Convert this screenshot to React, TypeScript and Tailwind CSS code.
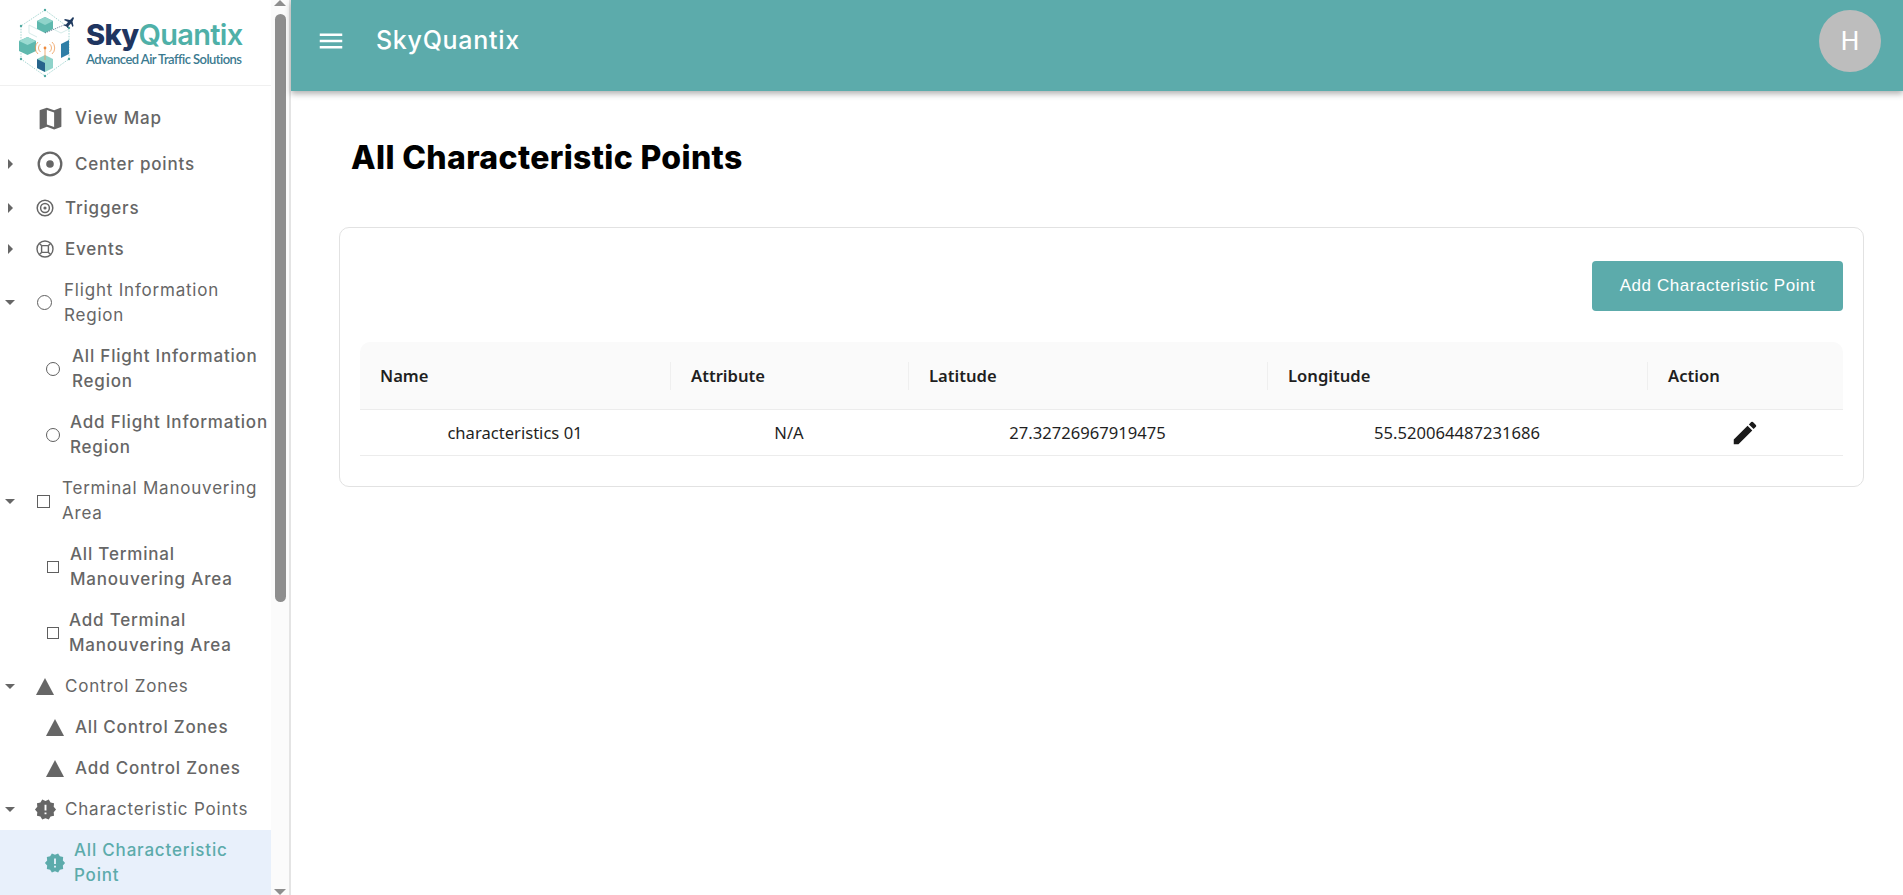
import { ReactNode } from "react";
import { MdEdit, MdNewReleases } from "react-icons/md";

const poppins = "font-['Inter','Noto_Sans',sans-serif]";

function SkyLogo() {
  return (
    <svg viewBox="0 0 56 70" className="h-[70px] w-[56px] shrink-0">
      <path d="M27 2 L51 20 L51 51 L27 68 L3 51 L3 18 Z" fill="none" stroke="#7cc4bd" strokeWidth="0.7" strokeDasharray="1.5 1.2" />
      {/* cubes */}
      <path d="M27 9 L35 13 L35 21 L27 25 L19 21 L19 13 Z" fill="#5fb8ae" />
      <path d="M27 17 L35 13 L27 9 L19 13 Z" fill="#8fd3ca" />
      <path d="M9.5 29 L18 33 L18 43 L9.5 47 L1 43 L1 33 Z" fill="#5fb8ae" />
      <path d="M9.5 37 L18 33 L9.5 29 L1 33 Z" fill="#9adad1" />
      <path d="M43 36 L51 32 L51 46 L43 50 Z" fill="#2f7ea6" />
      <path d="M27 47 L35 51 L35 60 L27 64 L19 60 L19 51 Z" fill="#8fd3ca" />
      <path d="M27 55 L27 64 L19 60 L19 51 Z" fill="#27648c" />
      <path d="M35 21 L43 25 L51 21 M19 21 L11 17 L11 25 L19 29" fill="none" stroke="#c4e2df" strokeWidth="0.7" />
      {/* antenna */}
      <g fill="none" stroke="#ee9a55" strokeWidth="0.8">
        <path d="M20 34 A8 8 0 0 0 20 46" />
        <path d="M34 34 A8 8 0 0 1 34 46" />
        <path d="M22.5 36 A5 5 0 0 0 22.5 44" />
        <path d="M31.5 36 A5 5 0 0 1 31.5 44" />
        <path d="M27 40 L27 52" />
      </g>
      <circle cx="27" cy="40" r="1.4" fill="#ee8a3c" />
      {/* nodes */}
      <g fill="#4ea8a0">
        <circle cx="27" cy="2" r="1.2" />
        <circle cx="3" cy="18" r="1.2" />
        <circle cx="3" cy="51" r="1.2" />
        <circle cx="27" cy="68" r="1.2" />
        <circle cx="51" cy="20" r="1.2" />
        <circle cx="51" cy="51" r="1.2" />
      </g>
      <path d="M27 25 L46 17" stroke="#1f3a5f" strokeWidth="0.6" strokeDasharray="1.2 1" />
      {/* plane */}
      <path d="M55 9 L52 12 L47 11 L46 12 L50 14 L48 16.5 L46 16.5 L46 17.5 L48.5 18.5 L49.5 20 L50.5 19.5 L50.5 18 L53 15.5 L54.5 19 L55.5 18 L54.5 13.5 L56 10 Z" fill="#1f3a5f" />
    </svg>
  );
}

const MapIcon = () => (
  <svg viewBox="0 0 24 24" className="h-[29px] w-[29px] fill-[#666666]">
    <path d="m20.5 3-.16.03L15 5.1 9 3 3.36 4.9c-.21.07-.36.25-.36.48V20.5c0 .28.22.5.5.5l.16-.03L9 18.9l6 2.1 5.64-1.9c.21-.07.36-.25.36-.48V3.5c0-.28-.22-.5-.5-.5M15 19l-6-2.11V5l6 2.11z" />
  </svg>
);

const RadioIcon = () => (
  <svg viewBox="0 0 26 26" className="h-[26px] w-[26px]">
    <circle cx="13" cy="13" r="11.3" fill="none" stroke="#666666" strokeWidth="2.3" />
    <circle cx="13" cy="13" r="3.8" fill="#666666" />
  </svg>
);

const TargetIcon = () => (
  <svg viewBox="0 0 18 18" className="h-[18px] w-[18px]">
    <circle cx="9" cy="9" r="7.8" fill="none" stroke="#666666" strokeWidth="1.5" />
    <circle cx="9" cy="9" r="4.4" fill="none" stroke="#666666" strokeWidth="1.5" />
    <circle cx="9" cy="9" r="1.6" fill="#666666" />
  </svg>
);

const EventsIcon = () => (
  <svg viewBox="0 0 18 18" className="h-[18px] w-[18px]" fill="none" stroke="#666666" strokeWidth="1.4">
    <circle cx="9" cy="9" r="8" />
    <rect x="5.6" y="5.6" width="6.8" height="6.8" rx="1" />
    <path d="M3.4 3.4 L5.8 5.8 M14.6 3.4 L12.2 5.8 M3.4 14.6 L5.8 12.2 M14.6 14.6 L12.2 12.2" />
  </svg>
);

const Ring = ({ size }: { size: string }) => (
  <div className={`${size} rounded-full border-[1.5px] border-[#5f5f5f]`} />
);

const Square = ({ size }: { size: string }) => <div className={`${size} border-[1.5px] border-[#5f5f5f]`} />;

const Triangle = () => (
  <svg viewBox="0 0 18 17" className="h-[17px] w-[18px] fill-[#666666]">
    <path d="M9 0 L18 17 L0 17 Z" />
  </svg>
);

const CaretRight = () => (
  <svg viewBox="0 0 5 10" className="h-[10px] w-[5px] fill-[#666666]">
    <path d="M0 0 L5 5 L0 10 Z" />
  </svg>
);

const CaretDown = () => (
  <svg viewBox="0 0 10 5" className="h-[5px] w-[10px] fill-[#666666]">
    <path d="M0 0 L10 0 L5 5 Z" />
  </svg>
);

type NavRow = {
  label: string;
  icon: ReactNode;
  rowClass: string;
  iconClass: string;
  textClass: string;
  caret?: "right" | "down";
  active?: boolean;
  parent?: boolean;
};

const navRows: NavRow[] = [
  { label: "View Map", icon: <MapIcon />, rowClass: "h-[46px]", iconClass: "ml-[16px] w-[29px]", textClass: "ml-[10px]" },
  { label: "Center points", icon: <RadioIcon />, rowClass: "h-[46px]", caret: "right", iconClass: "ml-[17px] w-[26px]", textClass: "ml-[12px]" },
  { label: "Triggers", icon: <TargetIcon />, rowClass: "h-[42px]", caret: "right", iconClass: "ml-[16px] w-[18px]", textClass: "ml-[11px]" },
  { label: "Events", icon: <EventsIcon />, rowClass: "h-[40px]", caret: "right", iconClass: "ml-[16px] w-[18px]", textClass: "ml-[11px]" },
  { label: "Flight Information\nRegion", icon: <Ring size="h-[15px] w-[15px]" />, rowClass: "h-[67px]", caret: "down", parent: true, iconClass: "ml-[17px] w-[15px]", textClass: "ml-[12px]" },
  { label: "All Flight Information\nRegion", icon: <Ring size="h-[14px] w-[14px]" />, rowClass: "h-[66px]", iconClass: "ml-[26px] w-[14px]", textClass: "ml-[12px]" },
  { label: "Add Flight Information\nRegion", icon: <Ring size="h-[14px] w-[14px]" />, rowClass: "h-[66px]", iconClass: "ml-[26px] w-[14px]", textClass: "ml-[10px]" },
  { label: "Terminal Manouvering\nArea", icon: <Square size="h-[13px] w-[13px]" />, rowClass: "h-[66px]", caret: "down", parent: true, iconClass: "ml-[17px] w-[13px]", textClass: "ml-[12px]" },
  { label: "All Terminal\nManouvering Area", icon: <Square size="h-[12px] w-[12px]" />, rowClass: "h-[66px]", iconClass: "ml-[27px] w-[12px]", textClass: "ml-[11px]" },
  { label: "Add Terminal\nManouvering Area", icon: <Square size="h-[12px] w-[12px]" />, rowClass: "h-[66px]", iconClass: "ml-[27px] w-[12px]", textClass: "ml-[10px]" },
  { label: "Control Zones", icon: <Triangle />, rowClass: "h-[40px]", caret: "down", parent: true, iconClass: "ml-[16px] w-[18px]", textClass: "ml-[11px]" },
  { label: "All Control Zones", icon: <Triangle />, rowClass: "h-[42px]", iconClass: "ml-[26px] w-[18px]", textClass: "ml-[11px]" },
  { label: "Add Control Zones", icon: <Triangle />, rowClass: "h-[40px]", iconClass: "ml-[26px] w-[18px]", textClass: "ml-[11px]" },
  { label: "Characteristic Points", icon: <MdNewReleases className="h-[23px] w-[23px] text-[#666666]" />, rowClass: "h-[42px]", caret: "down", parent: true, iconClass: "ml-[14px] w-[23px]", textClass: "ml-[8px]" },
  { label: "All Characteristic\nPoint", icon: <MdNewReleases className="h-[22px] w-[22px] text-[#5cabab]" />, rowClass: "h-[66px]", active: true, iconClass: "ml-[24px] w-[22px]", textClass: "ml-[8px]" },
];

function Sidebar() {
  return (
    <aside className="flex h-[895px] w-[291px] shrink-0 overflow-hidden border-r-2 border-[#e4e4e4] bg-white">
      <div className="w-[271px] shrink-0">
        <div className="flex h-[86px] items-center border-b border-[#f0f0f0] pl-[18px]">
          <SkyLogo />
          <div className="ml-[12px] mt-[-2px] flex flex-col">
            <span className="font-['Inter',sans-serif] text-[29px] leading-[34px] font-extrabold tracking-[-0.7px] text-[#1f3560]">
              Sky<span className="font-semibold text-[#4fb0a8]">Quantix</span>
            </span>
            <span className="font-['Lato',sans-serif] text-[13px] leading-[14px] font-semibold tracking-[-0.55px] text-[#3b7a90]">
              Advanced Air Traffic Solutions
            </span>
          </div>
        </div>
        <nav className="pt-[9px]">
          {navRows.map((row) => (
            <div key={row.label} className={`flex items-center ${row.rowClass} ${row.active ? "bg-[#e8f0fb]" : ""}`}>
              <div className="flex w-[20px] shrink-0 justify-center">
                {row.caret === "right" && <CaretRight />}
                {row.caret === "down" && <CaretDown />}
              </div>
              <div className={`flex shrink-0 justify-center ${row.iconClass}`}>{row.icon}</div>
              <span
                className={`${poppins} ${row.textClass} text-[17px] leading-[25px] tracking-[0.8px] whitespace-pre ${
                  row.active ? "font-[450] text-[#5cabab]" : row.parent ? "font-normal text-[#666666]" : "font-[450] text-[#666666]"
                }`}
              >
                {row.label}
              </span>
            </div>
          ))}
        </nav>
      </div>
      <div className="flex w-[18px] shrink-0 flex-col items-center bg-[#fbfbfb]">
        <div className="h-0 w-0 border-x-[6px] border-b-[6px] border-x-transparent border-b-[#8e8e8e]" />
        <div className="mt-[8px] h-[588px] w-[11px] rounded-full bg-[#8e8e8e]" />
        <div className="flex-1" />
        <div className="h-0 w-0 border-x-[6px] border-t-[6px] border-x-transparent border-t-[#8e8e8e]" />
      </div>
    </aside>
  );
}

function TopBar() {
  return (
    <header className="flex h-[91px] shrink-0 items-center bg-[#5cabab] pr-[22px] pb-[9px] pl-[25px] shadow-[0_3px_6px_rgba(0,0,0,0.3)]">
      <svg viewBox="0 0 24 24" className="h-[30px] w-[30px] fill-white">
        <path d="M3 18h18v-2H3zm0-5h18v-2H3zm0-7v2h18V6z" />
      </svg>
      <span className={`${poppins} ml-[30px] text-[25px] font-medium tracking-[0.7px] text-white`}>SkyQuantix</span>
      <div className="ml-auto flex h-[62px] w-[62px] items-center justify-center rounded-full bg-[#bdbdbd] font-['Roboto',sans-serif] text-[26px] text-white">
        H
      </div>
    </header>
  );
}

const columns = ["Name", "Attribute", "Latitude", "Longitude", "Action"];
const tableGrid = "grid grid-cols-[310px_238px_359px_380px_196px]";

function PointsTable() {
  return (
    <div className="font-['Noto_Sans',sans-serif] text-[16.6px] text-[#1f1f1f]">
      <div className={`${tableGrid} h-[68px] items-center rounded-t-[10px] border-b border-[#ececec] bg-[#fafafa] font-semibold`}>
        {columns.map((col, i) => (
          <div key={col} className={`h-[28px] leading-[28px] ${i > 0 ? "border-l border-[#efefef] pl-[20px]" : "pl-[20px]"}`}>
            {col}
          </div>
        ))}
      </div>
      <div className={`${tableGrid} h-[46px] items-center border-b border-[#ececec] pt-[2px] text-center`}>
        <div>characteristics 01</div>
        <div>N/A</div>
        <div>27.32726967919475</div>
        <div>55.520064487231686</div>
        <div className="flex justify-center">
          <MdEdit className="mb-[2px] h-[30px] w-[30px] text-[#1a1a1a]" />
        </div>
      </div>
    </div>
  );
}

export default function App() {
  return (
    <div className="flex h-[895px] overflow-hidden bg-white">
      <Sidebar />
      <main className="flex min-w-0 flex-1 flex-col">
        <TopBar />
        <div className="pr-[39px] pl-[48px]">
          <h1 className={`${poppins} mt-[47px] ml-[12px] text-[32px] leading-[40px] font-extrabold tracking-[0.35px] text-black`}>
            All Characteristic Points
          </h1>
          <section className="mt-[49px] rounded-[10px] border border-[#e2e2e2] px-[20px] pt-[33px] pb-[30px]">
            <div className="flex justify-end">
              <button className="h-[50px] w-[251px] rounded-[4px] bg-[#5cabab] font-['Liberation_Sans',sans-serif] text-[17px] tracking-[0.55px] text-white">
                Add Characteristic Point
              </button>
            </div>
            <div className="mt-[31px]">
              <PointsTable />
            </div>
          </section>
        </div>
      </main>
    </div>
  );
}
